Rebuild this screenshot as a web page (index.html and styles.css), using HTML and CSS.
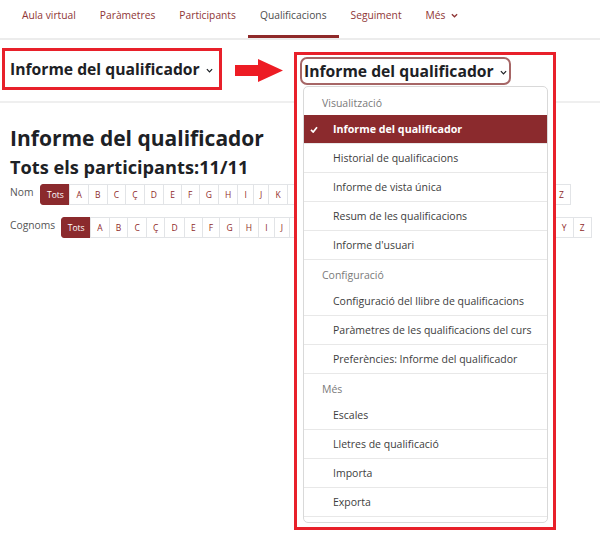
FILE: index.html
```html
<!DOCTYPE html>
<html lang="ca">
<head>
<meta charset="utf-8">
<title>Informe del qualificador</title>
<link rel="stylesheet" href="styles.css">
</head>
<body>
<div class="page">
  <nav class="topnav">
    <a class="tab">Aula virtual</a>
    <a class="tab">Paràmetres</a>
    <a class="tab">Participants</a>
    <a class="tab active">Qualificacions</a>
    <a class="tab">Seguiment</a>
    <a class="tab">Més <svg class="chev nav-chev" viewBox="0 0 8 5" width="7" height="5"><path d="M1 1l3 3 3-3" fill="none" stroke="currentColor" stroke-width="1.5"/></svg></a>
  </nav>

  <div class="tertiary">
    <div class="mark-box">
      <span class="selector">Informe del qualificador <svg class="chev" viewBox="0 0 8 5" width="7" height="5"><path d="M1 1l3 3 3-3" fill="none" stroke="currentColor" stroke-width="1.4"/></svg></span>
    </div>
    <svg class="arrow" viewBox="0 0 50 26" width="50" height="26"><polygon points="1,7 24,7 24,1 49,12.5 24,24 24,18 1,18" fill="#ed1c24"/></svg>
  </div>

  <main class="content">
    <h1>Informe del qualificador</h1>
    <h2>Tots els participants:11/11</h2>
    <div class="initials">
      <span class="lbl">Nom</span>
      <div class="letters">
        <a class="on">Tots</a><a>A</a><a>B</a><a>C</a><a>Ç</a><a>D</a><a>E</a><a>F</a><a>G</a><a>H</a><a>I</a><a>J</a><a>K</a><a>L</a><a>M</a><a>N</a><a>O</a><a>P</a><a>Q</a><a>R</a><a>S</a><a>T</a><a>U</a><a>V</a><a>W</a><a>X</a><a>Y</a><a>Z</a>
      </div>
    </div>
    <div class="initials second">
      <span class="lbl">Cognoms</span>
      <div class="letters">
        <a class="on">Tots</a><a>A</a><a>B</a><a>C</a><a>Ç</a><a>D</a><a>E</a><a>F</a><a>G</a><a>H</a><a>I</a><a>J</a><a>K</a><a>L</a><a>M</a><a>N</a><a>O</a><a>P</a><a>Q</a><a>R</a><a>S</a><a>T</a><a>U</a><a>V</a><a>W</a><a>X</a><a>Y</a><a>Z</a>
      </div>
    </div>
  </main>

  <div class="callout">
    <div class="selector open">Informe del qualificador <svg class="chev" viewBox="0 0 8 5" width="7" height="5"><path d="M1 1l3 3 3-3" fill="none" stroke="currentColor" stroke-width="1.4"/></svg></div>
    <div class="menu">
      <div class="mh">Visualització</div>
      <div class="mi sel"><span class="ck"><svg viewBox="0 0 8 7" width="8" height="7"><path d="M1 3.8l2.2 2.2L7 1.2" fill="none" stroke="#fff" stroke-width="1.7"/></svg></span>Informe del qualificador</div>
      <div class="mi"><span class="ck"></span>Historial de qualificacions</div>
      <div class="mi"><span class="ck"></span>Informe de vista única</div>
      <div class="mi"><span class="ck"></span>Resum de les qualificacions</div>
      <div class="mi"><span class="ck"></span>Informe d'usuari</div>
      <div class="mh sub">Configuració</div>
      <div class="mi"><span class="ck"></span>Configuració del llibre de qualificacions</div>
      <div class="mi"><span class="ck"></span>Paràmetres de les qualificacions del curs</div>
      <div class="mi"><span class="ck"></span>Preferències: Informe del qualificador</div>
      <div class="mh sub">Més</div>
      <div class="mi"><span class="ck"></span>Escales</div>
      <div class="mi"><span class="ck"></span>Lletres de qualificació</div>
      <div class="mi"><span class="ck"></span>Importa</div>
      <div class="mi"><span class="ck"></span>Exporta</div>
    </div>
  </div>
</div>
</body>
</html>
```

FILE: styles.css
```css
* { box-sizing: border-box; }
html, body { margin: 0; padding: 0; background: #fff; }
body {
  font-family: "Open Sans", "Noto Sans", sans-serif;
  color: #1d2125;
  width: 600px;
  height: 545px;
  overflow: hidden;
}
.page { position: relative; width: 600px; height: 545px; }

/* top navigation */
.topnav {
  display: flex;
  height: 40px;
  padding-left: 10px;
  border-bottom: 2px solid #ececec;
}
.tab {
  display: flex;
  align-items: center;
  align-self: flex-start;
  height: 38px;
  padding: 0 12px 8px;
  font-size: 10.25px;
  line-height: 14px;
  color: #8f3636;
  text-decoration: none;
  white-space: pre;
}
.tab:first-child { padding-left: 12px; }
.tab.active {
  color: #4d4d4d;
  box-shadow: inset 0 -3px 0 #8f2a2a;
}
.chev { display: block; flex: none; }
.nav-chev { margin-left: 3px; margin-top: 1px; }

/* tertiary navigation with annotation */
.tertiary {
  display: flex;
  align-items: flex-start;
  height: 63px;
  border-bottom: 2px solid #efefef;
}
.mark-box {
  margin: 8px 0 0 2px;
  width: 220px;
  height: 42px;
  border: 3px solid #e8202a;
  padding-left: 5px;
  display: flex;
  align-items: center;
}
.selector {
  display: inline-flex;
  align-items: center;
  gap: 6px;
  font-size: 15.7px;
  font-weight: 700;
  line-height: 24px;
  color: #1d2125;
  white-space: nowrap;
}
.selector .chev { margin-top: 3px; }
.arrow { display: block; margin: 18px 0 0 12px; }

/* page content */
.content { padding: 0 10px; }
h1 {
  margin: 22px 0 0;
  font-size: 21px;
  line-height: 26px;
  font-weight: 700;
}
h2 {
  margin: 4px 0 0;
  font-size: 18.2px;
  line-height: 24px;
  font-weight: 700;
}
.initials {
  display: flex;
  align-items: flex-start;
  gap: 7px;
  margin-top: 5px;
}
.initials.second { margin-top: 12px; gap: 6px; }
.lbl {
  font-size: 10.3px;
  line-height: 14px;
  padding-top: 1px;
  color: #555;
}
.letters { display: flex; }
.letters a {
  display: block;
  height: 21px;
  line-height: 19px;
  font-size: 8.5px;
  padding: 0 6.1px;
  border: 1px solid #e2e4e7;
  margin-left: -1px;
  color: #8f2a2a;
  background: #fff;
}
.letters a.on {
  margin-left: 0;
  padding: 0 5.5px;
  background: #8b2a2d;
  border-color: #8b2a2d;
  color: #fff;
  border-radius: 3px 0 0 3px;
}

/* annotated open dropdown */
.callout {
  position: absolute;
  left: 294px;
  top: 52px;
  width: 262px;
  height: 478px;
  border: 3px solid #e8202a;
  background: #fff;
  padding: 2px 0 0 3px;
}
.selector.open {
  display: flex;
  width: 211px;
  height: 28px;
  border: 2px solid #a66666;
  border-radius: 7px;
  padding-left: 2px;
}
.menu {
  margin: 1px 0 0 3px;
  width: 245px;
  height: 437px;
  border: 1px solid #d9d9d9;
  border-radius: 5px;
  overflow: hidden;
  background: #fff;
}
.mh {
  height: 28px;
  line-height: 24px;
  padding: 4px 0 0 18px;
  font-size: 10.5px;
  color: #7a7a7a;
}
.mh.sub { height: 27px; padding-top: 4px; line-height: 23px; }
.mi {
  display: flex;
  align-items: center;
  height: 29px;
  border-bottom: 1px solid #e8e8e8;
  padding-left: 6px;
  font-size: 10.5px;
  color: #3d3d3d;
  white-space: nowrap;
}
.mi .ck { width: 23px; flex: none; display: flex; align-items: center; }
.mi.sel {
  background: #8b2a2d;
  color: #fff;
  font-weight: 700;
  font-size: 10.7px;
}
```
